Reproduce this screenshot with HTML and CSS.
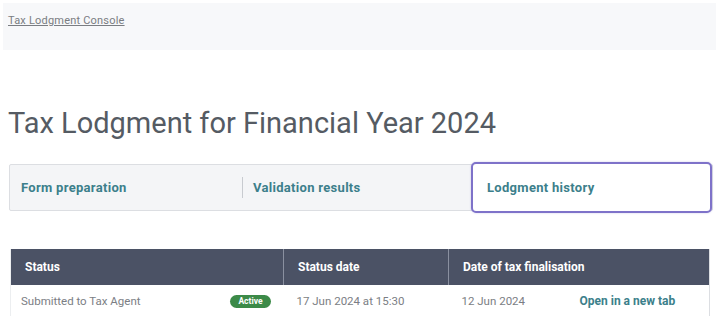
FILE: index.html
```html
<!DOCTYPE html>
<html>
<head>
<meta charset="utf-8">
<link rel="stylesheet" href="styles.css">
</head>
<body>
<header class="topbar">
  <a class="crumb" href="#">Tax Lodgment Console</a>
</header>
<main class="page">
  <h1 class="title">Tax Lodgment for Financial Year 2024</h1>
  <nav class="tabs">
    <div class="tab">Form preparation</div>
    <div class="tab tab-sep">Validation results</div>
    <div class="tab tab-active">Lodgment history</div>
  </nav>
  <table class="history">
    <thead>
      <tr>
        <th class="c1">Status</th>
        <th class="c2">Status date</th>
        <th class="c3" colspan="2">Date of tax finalisation</th>
      </tr>
    </thead>
    <tbody>
      <tr>
        <td class="c1"><div class="status"><span>Submitted to Tax Agent</span><span class="badge">Active</span></div></td>
        <td class="c2">17 Jun 2024 at 15:30</td>
        <td class="c3a">12 Jun 2024</td>
        <td class="c4"><a class="open" href="#">Open in a new tab</a></td>
      </tr>
    </tbody>
  </table>
</main>
</body>
</html>
```
FILE: styles.css
```css
* { box-sizing: border-box; }
html, body { margin: 0; padding: 0; background: #fff; }
body {
  font-family: Roboto, "Liberation Sans", sans-serif;
  width: 720px;
  height: 316px;
  overflow: hidden;
  padding: 3px 4px 0 3px;
}
.topbar {
  background: #f7f8fa;
  height: 47px;
  padding: 6px 5px;
}
.crumb {
  font-size: 11px;
  color: #7a7d82;
  text-decoration: underline;
  letter-spacing: 0.2px;
}
.page { padding: 0 3px 0 5px; }
.title {
  margin: 56px 0 0 0;
  font-weight: 400;
  font-size: 29px;
  line-height: 34px;
  color: #555b63;
  letter-spacing: 0;
}
.tabs {
  margin-top: 24px;
  margin-left: 1px;
  height: 47px;
  display: flex;
  align-items: center;
  background: #f4f5f7;
  border: 1px solid #dcdee2;
  border-radius: 2px;
  position: relative;
}
.tab {
  font-size: 13px;
  font-weight: 700;
  color: #3c7f8b;
  padding-left: 11px;
  height: 100%;
  display: flex;
  align-items: center;
  letter-spacing: 0.3px;
}
.tab:first-child { width: 232px; }
.tab-sep {
  width: 229px;
  position: relative;
}
.tab-sep::before {
  content: "";
  position: absolute;
  left: 0;
  top: 12px;
  bottom: 12px;
  width: 1px;
  background: #c8cbd0;
}
.tab-active {
  width: 241px;
  height: 51px;
  margin-top: -2px;
  margin-bottom: -2px;
  background: #fff;
  border: 2px solid #7e72c9;
  border-radius: 5px;
  padding-left: 14px;
  box-shadow: 0 0 2px rgba(126,114,201,0.4);
}
.history {
  margin-top: 38px;
  margin-left: 2px;
  width: 700px;
  border-collapse: collapse;
  border-right: 1px solid #dcdee2;
  border-left: 1px solid #eceef0;
}
.history th {
  background: #4b5265;
  color: #fff;
  font-size: 12px;
  font-weight: 700;
  text-align: left;
  height: 36px;
  padding: 0 0 0 14px;
}
.history th + th { border-left: 1px solid #8a90a0; }
.history td {
  height: 32px;
  font-size: 11.5px;
  color: #7b7e84;
  padding: 0 0 0 13px;
}
.c1 { width: 273px; }
.c2 { width: 165px; }
.history td.c1 { padding-left: 10px; padding-right: 13px; }
.status { display: flex; justify-content: space-between; align-items: center; }
.badge {
  background: #3c8a48;
  color: #fff;
  font-size: 8.5px;
  font-weight: 700;
  border-radius: 7px;
  padding: 1px 8px;
  line-height: 11px;
}
.c3a { width: 118px; }
.history td.c4 { padding-left: 13px; }
.open {
  color: #3c7f8b;
  font-weight: 700;
  font-size: 12px;
  text-decoration: none;
}
```
